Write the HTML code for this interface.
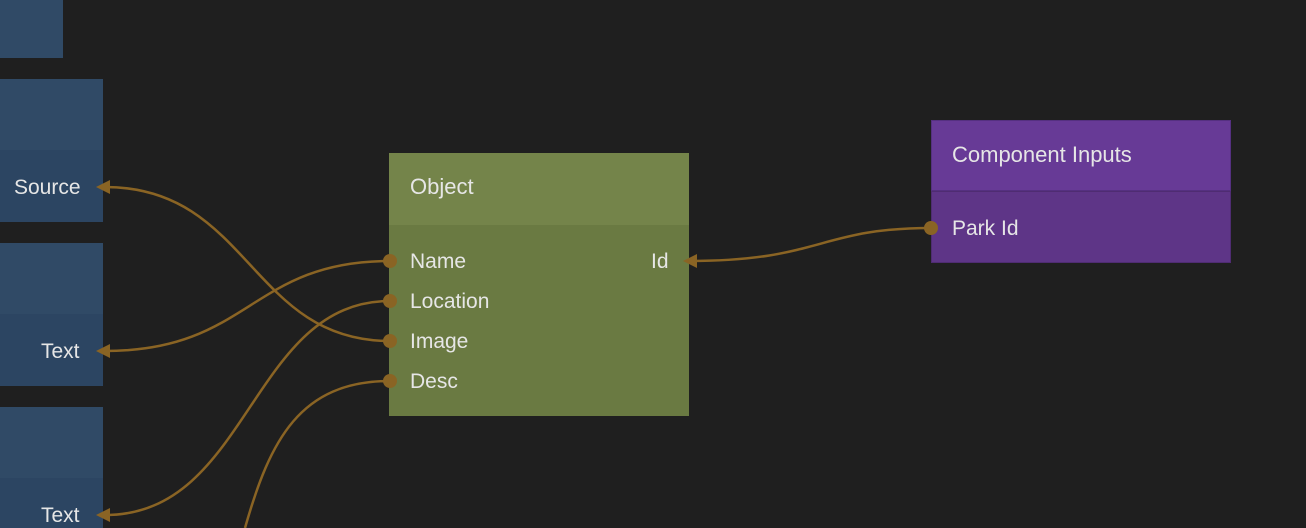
<!DOCTYPE html>
<html><head><style>
html,body{margin:0;width:1306px;height:528px;overflow:hidden}
body{background:#1f1f1f;position:relative;font-family:"Liberation Sans",sans-serif;color:#e6e6e6;font-size:21px}
.b{position:absolute}
.t{position:absolute;line-height:24px;white-space:nowrap}
</style></head><body>
<div class="b" style="left:0;top:0;width:63px;height:58px;background:#304a66"></div>
<div class="b" style="left:0;top:79px;width:103px;height:71px;background:#304a66"></div>
<div class="b" style="left:0;top:150px;width:103px;height:72px;background:#2c4562"></div>
<div class="b" style="left:0;top:243px;width:103px;height:71px;background:#304a66"></div>
<div class="b" style="left:0;top:314px;width:103px;height:72px;background:#2c4562"></div>
<div class="b" style="left:0;top:407px;width:103px;height:71px;background:#304a66"></div>
<div class="b" style="left:0;top:478px;width:103px;height:50px;background:#2c4562"></div>
<div class="t" style="left:14px;top:176px">Source</div>
<div class="t" style="left:41px;top:340px">Text</div>
<div class="t" style="left:41px;top:504px">Text</div>

<div class="b" style="left:389px;top:153px;width:300px;height:72px;background:#74844a"></div>
<div class="b" style="left:389px;top:225px;width:300px;height:191px;background:#6a7a42"></div>
<div class="t" style="left:410px;top:175px;font-size:22px">Object</div>
<div class="t" style="left:410px;top:250px">Name</div>
<div class="t" style="left:410px;top:290px">Location</div>
<div class="t" style="left:410px;top:330px">Image</div>
<div class="t" style="left:410px;top:370px">Desc</div>
<div class="t" style="left:651px;top:250px">Id</div>

<div class="b" style="left:931px;top:120px;width:300px;height:71px;background:#673a96;box-shadow:inset 0 0 0 1px #553080"></div>
<div class="b" style="left:931px;top:191px;width:300px;height:72px;background:#5e3587;box-shadow:inset 0 0 0 1px #4f2c72"></div>
<div class="t" style="left:952px;top:143px;font-size:22px">Component Inputs</div>
<div class="t" style="left:952px;top:217px">Park Id</div>

<svg class="b" style="left:0;top:0" width="1306" height="528">
<g fill="none" stroke="#8a6424" stroke-width="2.5">
<path d="M105 187 C250 187 250 341 390 341"/>
<path d="M105 351 C250 351 250 261 390 261"/>
<path d="M105 515 C250 515 250 301 390 301"/>
<path d="M390 381 C300 381 270 440 245 528"/>
<path d="M690 261 C820 261 820 228 931 228"/>
</g>
<g fill="#8a6424">
<polygon points="96,187 110,180 110,194"/>
<polygon points="96,351 110,344 110,358"/>
<polygon points="96,515 110,508 110,522"/>
<polygon points="683,261 697,254 697,268"/>
<circle cx="390" cy="261" r="7"/><circle cx="390" cy="301" r="7"/>
<circle cx="390" cy="341" r="7"/><circle cx="390" cy="381" r="7"/>
<circle cx="931" cy="228" r="7"/>
</g>
</svg>
</body></html>
